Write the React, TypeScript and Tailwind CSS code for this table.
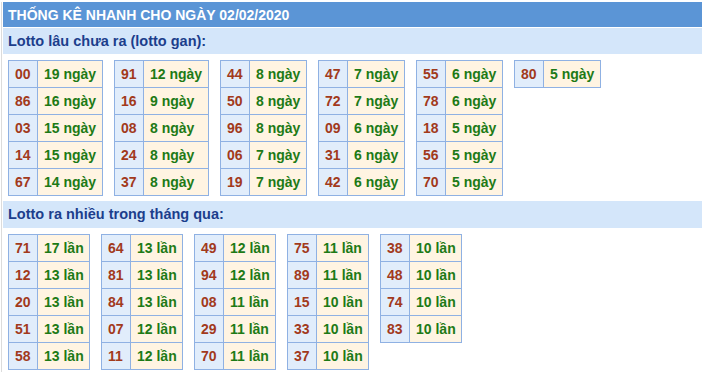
import React from "react";

const gan: [string, string][][] = [
  [["00", "19 ngày"], ["86", "16 ngày"], ["03", "15 ngày"], ["14", "15 ngày"], ["67", "14 ngày"]],
  [["91", "12 ngày"], ["16", "9 ngày"], ["08", "8 ngày"], ["24", "8 ngày"], ["37", "8 ngày"]],
  [["44", "8 ngày"], ["50", "8 ngày"], ["96", "8 ngày"], ["06", "7 ngày"], ["19", "7 ngày"]],
  [["47", "7 ngày"], ["72", "7 ngày"], ["09", "6 ngày"], ["31", "6 ngày"], ["42", "6 ngày"]],
  [["55", "6 ngày"], ["78", "6 ngày"], ["18", "5 ngày"], ["56", "5 ngày"], ["70", "5 ngày"]],
  [["80", "5 ngày"]],
];

const nhieu: [string, string][][] = [
  [["71", "17 lần"], ["12", "13 lần"], ["20", "13 lần"], ["51", "13 lần"], ["58", "13 lần"]],
  [["64", "13 lần"], ["81", "13 lần"], ["84", "13 lần"], ["07", "12 lần"], ["11", "12 lần"]],
  [["49", "12 lần"], ["94", "12 lần"], ["08", "11 lần"], ["29", "11 lần"], ["70", "11 lần"]],
  [["75", "11 lần"], ["89", "11 lần"], ["15", "10 lần"], ["33", "10 lần"], ["37", "10 lần"]],
  [["38", "10 lần"], ["48", "10 lần"], ["74", "10 lần"], ["83", "10 lần"]],
];

function Box({ rows, cols }: { rows: [string, string][]; cols: string }) {
  return (
    <div className={`grid ${cols} self-start border-l border-t border-[#8fb1e3]`}>
      {rows.map(([n, v], i) => (
        <React.Fragment key={i}>
          <div className="flex h-[27px] items-center border-b border-r border-[#8fb1e3] bg-[#e1edfb] pl-[6px] text-[#a23a1c]">
            {n}
          </div>
          <div className="flex h-[27px] items-center whitespace-nowrap border-b border-r border-[#8fb1e3] bg-[#fff4e2] pl-[6px] text-[#1d7a16]">
            {v}
          </div>
        </React.Fragment>
      ))}
    </div>
  );
}

const ganCols = [
  "grid-cols-[29px_65px]",
  "grid-cols-[29px_65px]",
  "grid-cols-[29px_57px]",
  "grid-cols-[29px_57px]",
  "grid-cols-[29px_57px]",
  "grid-cols-[29px_57px]",
];

export default function App() {
  return (
    <div
      className="min-h-[372px] w-[702px] bg-white pt-[2px] text-[14px] font-bold leading-none"
      style={{ fontFamily: '"Liberation Sans", Arial, sans-serif' }}
    >
      <div className="ml-[1px] border-l border-[#dcdcdc] pl-[1px]">
        <div className="flex h-[25px] items-center bg-[#5b95d6] pl-[5px] text-[14px] text-white">
          THỐNG KÊ NHANH CHO NGÀY 02/02/2020
        </div>
        <div className="mt-[1px] flex h-[26px] items-center bg-[#d4e6fa] pl-[5px] text-[14.5px] text-[#1c3e8c]">
          Lotto lâu chưa ra (lotto gan):
        </div>
        <div className="flex gap-[11px] pl-[5px] pt-[6px]">
          {gan.map((r, i) => (
            <Box key={i} rows={r} cols={ganCols[i]} />
          ))}
        </div>
        <div className="mt-[5px] flex h-[27px] items-center bg-[#d4e6fa] pl-[5px] text-[14.5px] text-[#1c3e8c]">
          Lotto ra nhiều trong tháng qua:
        </div>
        <div className="flex gap-[11px] pb-[8px] pl-[5px] pt-[6px]">
          {nhieu.map((r, i) => (
            <Box key={i} rows={r} cols="grid-cols-[29px_52px]" />
          ))}
        </div>
      </div>
    </div>
  );
}
